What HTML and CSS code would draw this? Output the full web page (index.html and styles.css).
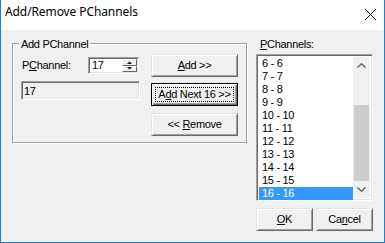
FILE: index.html
```html
<!DOCTYPE html>
<html>
<head>
<meta charset="utf-8">
<title>Add/Remove PChannels</title>
<link rel="stylesheet" href="styles.css">
</head>
<body>
<div class="window">
  <div class="titlebar">
    <span class="title">Add/Remove PChannels</span>
    <svg class="close" width="11" height="11" viewBox="0 0 11 11"><path d="M0 0L11 11M11 0L0 11" stroke="#000" stroke-width="1" fill="none"/></svg>
  </div>
  <div class="client">
    <div class="group">
      <div class="group-title">Add PChannel</div>
      <div class="group-body">
        <div class="left-col">
          <div class="field-row">
            <span class="field-label">P<u>C</u>hannel:</span>
            <div class="spin-edit">
              <span class="edit-text">17</span>
              <div class="spin">
                <div class="spin-btn"><svg width="5" height="3" viewBox="0 0 5 3"><path d="M0 3L2.5 0.5L5 3Z" fill="#000"/></svg></div>
                <div class="spin-btn"><svg width="5" height="3" viewBox="0 0 5 3"><path d="M0 0L2.5 2.5L5 0Z" fill="#000"/></svg></div>
              </div>
            </div>
          </div>
          <div class="readonly">17</div>
        </div>
        <div class="btn-col">
          <div class="btn"><span><u>A</u>dd &gt;&gt;</span></div>
          <div class="btn default"><span class="focus"><span>A<u>d</u>d Next 16 &gt;&gt;</span></span></div>
          <div class="btn"><span>&lt;&lt; <u>R</u>emove</span></div>
        </div>
      </div>
    </div>
    <div class="right-col">
      <div class="list-label"><u>P</u>Channels:</div>
      <div class="listbox">
        <ul class="items">
          <li>6 - 6</li>
          <li>7 - 7</li>
          <li>8 - 8</li>
          <li>9 - 9</li>
          <li>10 - 10</li>
          <li>11 - 11</li>
          <li>12 - 12</li>
          <li>13 - 13</li>
          <li>14 - 14</li>
          <li>15 - 15</li>
          <li class="selected">16 - 16</li>
        </ul>
        <div class="scrollbar">
          <div class="sb-arrow"><svg width="9" height="5" viewBox="0 0 9 5"><path d="M0.5 4.5L4.5 0.8L8.5 4.5" stroke="#606060" stroke-width="1.4" fill="none"/></svg></div>
          <div class="sb-track"><div class="sb-thumb"></div></div>
          <div class="sb-arrow"><svg width="9" height="5" viewBox="0 0 9 5"><path d="M0.5 0.5L4.5 4.2L8.5 0.5" stroke="#606060" stroke-width="1.4" fill="none"/></svg></div>
        </div>
      </div>
      <div class="dlg-buttons">
        <div class="btn small"><span><u>O</u>K</span></div>
        <div class="btn small"><span>Ca<u>n</u>cel</span></div>
      </div>
    </div>
  </div>
</div>
</body>
</html>
```
FILE: styles.css
```css
html, body {
  margin: 0;
  padding: 0;
  background: #f0f0f0;
}

.window {
  width: 385px;
  height: 243px;
  box-sizing: border-box;
  border: 1px solid #1883d7;
  border-top: 0;
  display: flex;
  flex-direction: column;
  font-family: "Liberation Sans", Arial, sans-serif;
  font-size: 11px;
  line-height: 13px;
  letter-spacing: -0.3px;
  color: #000;
}

.titlebar {
  height: 30px;
  flex: none;
  background: #fff;
  display: flex;
  align-items: flex-start;
  justify-content: space-between;
  padding: 4px 8px 0 4px;
  box-sizing: border-box;
}

.title {
  font-family: "Noto Sans", "Open Sans", sans-serif;
  font-size: 12px;
  line-height: 16px;
  letter-spacing: -0.1px;
}

.close {
  margin-top: 5px;
  display: block;
}

.client {
  flex: 1;
  background: #f0f0f0;
  display: flex;
  align-items: flex-start;
}

.group {
  margin: 13px 0 0 11px;
  width: 235px;
  height: 100px;
  box-sizing: border-box;
  border: 1px solid #a0a0a0;
  box-shadow: inset 1px 1px 0 #fff, 1px 1px 0 #fff;
}

.group-title {
  width: max-content;
  margin: -6px 0 0 6px;
  padding: 0 2px;
  background: #f0f0f0;
}

.group-body {
  display: flex;
  align-items: flex-start;
  gap: 11px;
  padding: 0 8px;
}

.left-col {
  width: 119px;
  margin-top: 6px;
  display: flex;
  flex-direction: column;
}

.field-row {
  display: flex;
  align-items: center;
  height: 17px;
}

.field-label {
  width: 67px;
  padding-left: 1px;
  box-sizing: border-box;
}

.spin-edit,
.readonly,
.listbox {
  box-sizing: border-box;
  border: 1px solid;
  border-color: #a0a0a0 #fff #fff #a0a0a0;
  box-shadow: inset 1px 1px 0 #696969, inset -1px -1px 0 #e3e3e3;
}

.spin-edit {
  width: 51px;
  height: 17px;
  background: #fff;
  display: flex;
  align-items: center;
  padding: 1px;
}

.edit-text {
  flex: 1;
  padding-left: 2px;
}

.spin {
  width: 15px;
  height: 13px;
  display: flex;
  flex-direction: column;
}

.spin-btn {
  flex: 1;
  box-sizing: border-box;
  background: #f0f0f0;
  border: 1px solid;
  border-color: #fff #696969 #696969 #fff;
  display: flex;
  align-items: center;
  justify-content: center;
}

.spin-btn svg {
  display: block;
}

.readonly {
  margin-top: 7px;
  height: 19px;
  padding: 2px 2px 0 2px;
  background: #f0f0f0;
  line-height: 14px;
}

.btn-col {
  margin-top: 3px;
  display: flex;
  flex-direction: column;
  gap: 6px;
}

.btn {
  width: 87px;
  height: 23px;
  box-sizing: border-box;
  background: #f0f0f0;
  border: 1px solid;
  border-color: #e3e3e3 #696969 #696969 #e3e3e3;
  box-shadow: inset 1px 1px 0 #fff, inset -1px -1px 0 #a0a0a0;
  display: flex;
  align-items: center;
  justify-content: center;
  white-space: nowrap;
}

.btn.default {
  border-color: #000;
  box-shadow: inset 1px 1px 0 #fff, inset -1px -1px 0 #696969, inset -2px -2px 0 #a0a0a0;
  margin-bottom: 1px;
}

.focus {
  display: flex;
  align-items: center;
  justify-content: center;
  width: 79px;
  height: 15px;
  box-sizing: border-box;
  border: 1px dotted #000;
}

.right-col {
  margin: 8px 0 0 9px;
  display: flex;
  flex-direction: column;
}

.list-label {
  padding-left: 4px;
}

.listbox {
  margin-top: 3px;
  width: 117px;
  height: 147px;
  background: #fff;
  display: flex;
  padding: 2px;
}

.items {
  list-style: none;
  margin: 0;
  padding: 0;
  flex: 1;
}

.items li {
  height: 13px;
  padding-left: 3px;
}

.items li.selected {
  background: #3399ff;
  color: #fff;
}

.scrollbar {
  width: 17px;
  background: #f0f0f0;
  display: flex;
  flex-direction: column;
}

.sb-arrow {
  height: 17px;
  display: flex;
  align-items: center;
  justify-content: center;
}

.sb-arrow svg {
  display: block;
}

.sb-track {
  flex: 1;
  display: flex;
  flex-direction: column;
  justify-content: flex-end;
}

.sb-thumb {
  height: 76px;
  margin: 0 1px;
  background: #cdcdcd;
}

.dlg-buttons {
  margin-top: 7px;
  display: flex;
  gap: 3px;
}

.btn.small {
  width: 57px;
}
```
